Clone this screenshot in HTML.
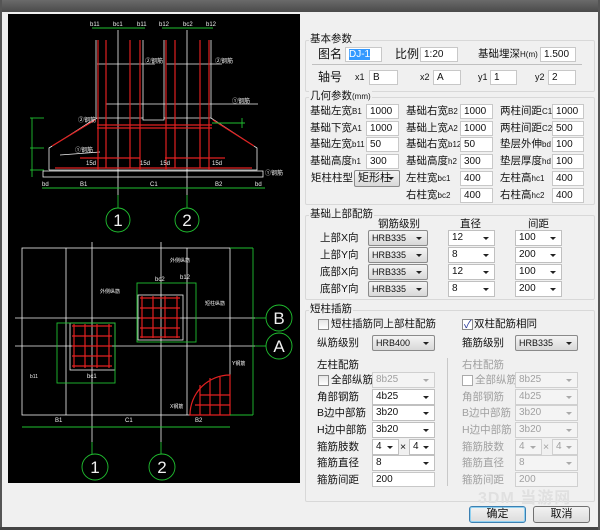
<!DOCTYPE html>
<html><head><meta charset="utf-8">
<style>
*{margin:0;padding:0;box-sizing:border-box}
body{width:600px;height:530px;overflow:hidden;background:#f0f0f0;font-family:"Liberation Sans","Noto Sans CJK SC",sans-serif;font-size:10.5px;color:#111;position:relative}
.a{position:absolute;white-space:nowrap;line-height:14px}
.i{position:absolute;height:15px;background:#fff;border:1px solid #c8c8c8;font-size:10px;line-height:13px;padding-left:3px;font-family:"Liberation Sans","Noto Sans CJK SC",sans-serif}
.s{position:absolute;height:16px;background:#fff;border:1px solid #c0c0c0;font-size:10px;line-height:14px;padding-left:3px}
.s:after{content:"";position:absolute;right:5px;top:6px;border-left:3px solid transparent;border-right:3px solid transparent;border-top:3px solid #222}
.g{background:linear-gradient(#f4f4f4,#d8d8d8);border:1px solid #8a8a8a;border-radius:2px;font-size:9px}
.d{color:#a0a0a0}
.d.s,.d.i{background:#f4f4f4;border-color:#d0d0d0}
.d.s:after{border-top-color:#aaa}
.box{position:absolute;border:1px solid #d8d8d8;border-radius:2px}
.cb{position:absolute;width:11px;height:11px;border:1px solid #8a8a8a;background:linear-gradient(#e6e6e6,#fff)}
.btn{position:absolute;height:17px;border:1px solid #707070;border-radius:3px;background:linear-gradient(#f2f2f2,#dcdcdc);text-align:center;line-height:15px;font-size:11px}
</style></head><body>
<div style="position:absolute;left:0;top:0;width:600px;height:12px;background:linear-gradient(#6a6a6a,#4a4a4a)"></div>
<div style="position:absolute;left:0;top:0;width:2px;height:530px;background:#555"></div>
<div style="position:absolute;left:0;top:527px;width:600px;height:3px;background:#444"></div>
<div style="position:absolute;left:598px;top:0;width:2px;height:530px;background:#555"></div>
<div style="position:absolute;left:8px;top:14px;width:292px;height:469px;background:#000"></div>
<svg style="position:absolute;left:0;top:0" width="300" height="483" viewBox="0 0 300 483" font-family="Liberation Sans" font-size="6">
<g stroke="#f0f0f0" stroke-width="0.8" fill="none">
<line x1="96" y1="40" x2="96" y2="118"/><line x1="143" y1="40" x2="143" y2="118"/>
<line x1="164" y1="40" x2="164" y2="118"/><line x1="211" y1="40" x2="211" y2="118"/>
<polyline points="49,170 49,148 97,118 143,118 143,120 164,120 164,118 211,118 257,148 257,170 49,170"/>
<rect x="43" y="171" width="220" height="6"/>
<line x1="118" y1="30" x2="118" y2="195"/><line x1="187" y1="30" x2="187" y2="195"/>
<line x1="97" y1="64" x2="155" y2="64"/><line x1="166" y1="64" x2="222" y2="64"/>
<line x1="106" y1="104" x2="258" y2="104"/>
<line x1="60" y1="155" x2="100" y2="152"/><line x1="70" y1="135" x2="90" y2="122"/>
<rect x="22" y="18" width="208" height="167" transform="translate(0,230)"/>
<line x1="66" y1="248" x2="66" y2="415"/><line x1="187" y1="248" x2="187" y2="415"/>
<line x1="92" y1="242" x2="92" y2="442"/><line x1="161" y1="242" x2="161" y2="442"/>
<line x1="15" y1="318" x2="255" y2="318"/><line x1="15" y1="346" x2="255" y2="346"/>
<rect x="70" y="323" width="45" height="47"/><rect x="138" y="295" width="45" height="45"/>
</g>
<g stroke="#e02020" stroke-width="1.2" fill="none">
<line x1="98" y1="40" x2="98" y2="170"/><line x1="106" y1="40" x2="106" y2="168"/><line x1="130" y1="40" x2="130" y2="168"/><line x1="140" y1="40" x2="140" y2="170"/>
<line x1="166" y1="40" x2="166" y2="170"/><line x1="175" y1="40" x2="175" y2="168"/><line x1="200" y1="40" x2="200" y2="168"/><line x1="209" y1="40" x2="209" y2="170"/>
<line x1="97" y1="125" x2="212" y2="125"/><line x1="97" y1="128" x2="212" y2="128"/>
<line x1="55" y1="168" x2="252" y2="168"/><line x1="80" y1="158" x2="140" y2="158"/><line x1="165" y1="158" x2="225" y2="158"/>
<line x1="52" y1="146" x2="95" y2="120"/><line x1="213" y1="120" x2="254" y2="146"/>
<path d="M72 326h40M72 336h40M72 346h40M72 356h40M72 366h40M74 324v44M85 324v44M97 324v44M109 324v44"/>
<path d="M140 298h40M140 308h40M140 318h40M140 328h40M140 337h40M142 296v42M153 296v42M165 296v42M177 296v42"/>
<path d="M190 415A40 40 0 0 1 230 375V415Z M200 395h30M195 405h35M200 385v30M210 378v37M220 376v39"/>
</g>
<g stroke="#20c030" stroke-width="0.9" fill="none">
<line x1="92" y1="28" x2="145" y2="28"/><line x1="162" y1="28" x2="213" y2="28"/>
<line x1="42" y1="188" x2="265" y2="188"/>
<line x1="32" y1="118" x2="32" y2="177"/><line x1="30" y1="118" x2="44" y2="118"/><line x1="30" y1="148" x2="44" y2="148"/><line x1="30" y1="170" x2="44" y2="170"/>
<line x1="118" y1="195" x2="118" y2="208"/><line x1="187" y1="195" x2="187" y2="208"/>
<circle cx="118" cy="220" r="12"/><circle cx="187" cy="220" r="12"/>
<line x1="92" y1="442" x2="92" y2="454"/><line x1="161" y1="442" x2="161" y2="454"/>
<circle cx="95" cy="467" r="13"/><circle cx="162" cy="467" r="13"/>
<line x1="255" y1="318" x2="266" y2="318"/><line x1="255" y1="346" x2="266" y2="346"/>
<circle cx="279" cy="318" r="13"/><circle cx="279" cy="346" r="13"/>
<line x1="253" y1="248" x2="253" y2="415"/><line x1="230" y1="248" x2="253" y2="248"/><line x1="230" y1="415" x2="253" y2="415"/>
<line x1="22" y1="427" x2="230" y2="427"/>
<rect x="57" y="323" width="58" height="60"/><rect x="137" y="283" width="59" height="59"/>
<line x1="212" y1="123" x2="245" y2="123"/><line x1="242" y1="118" x2="242" y2="128"/>
</g>
<g fill="#f0f0f0">
<text x="90" y="26">b11</text><text x="113" y="26">bc1</text><text x="137" y="26">b11</text>
<text x="159" y="26">b12</text><text x="183" y="26">bc2</text><text x="206" y="26">b12</text>
<text x="42" y="186">bd</text><text x="80" y="186">B1</text><text x="150" y="186">C1</text><text x="215" y="186">B2</text><text x="255" y="186">bd</text>
<text x="145" y="63">②钢筋</text><text x="215" y="63">②钢筋</text><text x="232" y="103">①钢筋</text><text x="78" y="122">②钢筋</text><text x="75" y="152">①钢筋</text><text x="265" y="175">①钢筋</text>
<text x="86" y="165">15d</text><text x="140" y="165">15d</text><text x="160" y="165">15d</text><text x="212" y="165">15d</text>
<text x="30" y="378" font-size="5">b11</text><text x="87" y="378">bc1</text><text x="155" y="281">bc2</text><text x="180" y="279">b12</text>
<text x="100" y="293" font-size="5">外侧纵筋</text><text x="170" y="262" font-size="5">外侧纵筋</text><text x="205" y="305" font-size="5">短柱纵筋</text><text x="232" y="365" font-size="5">Y钢筋</text><text x="170" y="408" font-size="5">X钢筋</text>
<text x="55" y="422">B1</text><text x="125" y="422">C1</text><text x="195" y="422">B2</text>
</g>
<g fill="#f0f0f0" font-size="17" font-family="Liberation Sans" text-anchor="middle">
<text x="118" y="226">1</text><text x="187" y="226">2</text><text x="95" y="473">1</text><text x="162" y="473">2</text>
<text x="279" y="324">B</text><text x="279" y="352">A</text>
</g>
</svg>

<div class="box" style="left:305px;top:40px;width:290px;height:52px"></div>
<div class="a" style="left:309px;top:32px;background:#f0f0f0;padding:0 1px">基本参数</div>
<div class="a" style="left:318px;top:47px;font-size:12px">图名</div>
<div class="i" style="left:345px;top:47px;width:37px"><span style="background:#3399ff;color:#fff">DJ-1</span></div>
<div class="a" style="left:395px;top:47px;font-size:12px">比例</div>
<div class="i" style="left:420px;top:47px;width:38px">1:20</div>
<div class="a" style="left:478px;top:47px">基础埋深<span style="font-size:8px">H(m)</span></div>
<div class="i" style="left:540px;top:47px;width:36px">1.500</div>
<div style="position:absolute;left:312px;top:64px;width:270px;height:1px;background:#c0c0c0"></div>
<div class="a" style="left:318px;top:70px;font-size:12px">轴号</div>
<div class="a" style="left:355px;top:70px;font-size:9px">x1</div><div class="i" style="left:369px;top:70px;width:29px">B</div>
<div class="a" style="left:420px;top:70px;font-size:9px">x2</div><div class="i" style="left:433px;top:70px;width:28px">A</div>
<div class="a" style="left:478px;top:70px;font-size:9px">y1</div><div class="i" style="left:490px;top:70px;width:27px">1</div>
<div class="a" style="left:535px;top:70px;font-size:9px">y2</div><div class="i" style="left:548px;top:70px;width:28px">2</div>

<div class="box" style="left:305px;top:97px;width:290px;height:108px"></div>
<div class="a" style="left:309px;top:89px;background:#f0f0f0;padding:0 1px">几何参数<span style="font-size:8px">(mm)</span></div>
<div class="a" style="left:310px;top:104px">基础左宽<span style="font-size:8px">B1</span></div><div class="i" style="left:366px;top:104px;width:33px">1000</div>
<div class="a" style="left:406px;top:104px">基础右宽<span style="font-size:8px">B2</span></div><div class="i" style="left:460px;top:104px;width:33px">1000</div>
<div class="a" style="left:500px;top:104px">两柱间距<span style="font-size:8px">C1</span></div><div class="i" style="left:552px;top:104px;width:32px">1000</div>
<div class="a" style="left:310px;top:121px">基础下宽<span style="font-size:8px">A1</span></div><div class="i" style="left:366px;top:121px;width:33px">1000</div>
<div class="a" style="left:406px;top:121px">基础上宽<span style="font-size:8px">A2</span></div><div class="i" style="left:460px;top:121px;width:33px">1000</div>
<div class="a" style="left:500px;top:121px">两柱间距<span style="font-size:8px">C2</span></div><div class="i" style="left:552px;top:121px;width:32px">500</div>
<div class="a" style="left:310px;top:137px">基础左宽<span style="font-size:8px">b11</span></div><div class="i" style="left:366px;top:137px;width:33px">50</div>
<div class="a" style="left:406px;top:137px">基础右宽<span style="font-size:8px">b12</span></div><div class="i" style="left:460px;top:137px;width:33px">50</div>
<div class="a" style="left:500px;top:137px">垫层外伸<span style="font-size:8px">bd</span></div><div class="i" style="left:552px;top:137px;width:32px">100</div>
<div class="a" style="left:310px;top:154px">基础高度<span style="font-size:8px">h1</span></div><div class="i" style="left:366px;top:154px;width:33px">300</div>
<div class="a" style="left:406px;top:154px">基础高度<span style="font-size:8px">h2</span></div><div class="i" style="left:460px;top:154px;width:33px">300</div>
<div class="a" style="left:500px;top:154px">垫层厚度<span style="font-size:8px">hd</span></div><div class="i" style="left:552px;top:154px;width:32px">100</div>
<div class="a" style="left:311px;top:171px">矩柱柱型</div><div class="s g" style="left:354px;top:170px;width:46px;height:17px;font-size:11px">矩形柱</div>
<div class="a" style="left:406px;top:171px">左柱宽<span style="font-size:8px">bc1</span></div><div class="i" style="left:460px;top:171px;width:33px">400</div>
<div class="a" style="left:500px;top:171px">左柱高<span style="font-size:8px">hc1</span></div><div class="i" style="left:552px;top:171px;width:32px">400</div>
<div class="a" style="left:406px;top:188px">右柱宽<span style="font-size:8px">bc2</span></div><div class="i" style="left:460px;top:188px;width:33px">400</div>
<div class="a" style="left:500px;top:188px">右柱高<span style="font-size:8px">hc2</span></div><div class="i" style="left:552px;top:188px;width:32px">400</div>

<div class="box" style="left:305px;top:215px;width:290px;height:85px"></div>
<div class="a" style="left:309px;top:207px;background:#f0f0f0;padding:0 1px">基础上部配筋</div>
<div class="a" style="left:378px;top:217px">钢筋级别</div><div class="a" style="left:460px;top:217px">直径</div><div class="a" style="left:528px;top:217px">间距</div>
<div class="a" style="left:320px;top:231px">上部X向</div><div class="s g" style="left:368px;top:230px;width:60px">HRB335</div><div class="s" style="left:448px;top:230px;width:47px">12</div><div class="s" style="left:515px;top:230px;width:47px">100</div>
<div class="a" style="left:320px;top:248px">上部Y向</div><div class="s g" style="left:368px;top:247px;width:60px">HRB335</div><div class="s" style="left:448px;top:247px;width:47px">8</div><div class="s" style="left:515px;top:247px;width:47px">200</div>
<div class="a" style="left:320px;top:265px">底部X向</div><div class="s g" style="left:368px;top:264px;width:60px">HRB335</div><div class="s" style="left:448px;top:264px;width:47px">12</div><div class="s" style="left:515px;top:264px;width:47px">100</div>
<div class="a" style="left:320px;top:282px">底部Y向</div><div class="s g" style="left:368px;top:281px;width:60px">HRB335</div><div class="s" style="left:448px;top:281px;width:47px">8</div><div class="s" style="left:515px;top:281px;width:47px">200</div>

<div class="box" style="left:305px;top:310px;width:290px;height:192px"></div>
<div class="a" style="left:309px;top:302px;background:#f0f0f0;padding:0 1px">短柱插筋</div>
<div class="cb" style="left:318px;top:319px"></div><div class="a" style="left:331px;top:317px">短柱插筋同上部柱配筋</div>
<div class="cb" style="left:462px;top:319px;background:#fff"><span style="position:absolute;left:1px;top:-4px;font-size:11px;color:#2a3a9a">✓</span></div><div class="a" style="left:474px;top:317px">双柱配筋相同</div>
<div class="a" style="left:317px;top:336px">纵筋级别</div><div class="s g" style="left:372px;top:335px;width:63px">HRB400</div>
<div class="a" style="left:462px;top:336px">箍筋级别</div><div class="s g" style="left:515px;top:335px;width:63px">HRB335</div>
<div class="a" style="left:317px;top:358px">左柱配筋</div><div class="a d" style="left:462px;top:358px">右柱配筋</div>
<div style="position:absolute;left:447px;top:358px;width:1px;height:128px;background:#c8c8c8"></div>
<div class="cb" style="left:318px;top:375px"></div><div class="a" style="left:331px;top:373px">全部纵筋</div><div class="s d" style="left:372px;top:372px;width:63px">8b25</div>
<div class="cb" style="left:462px;top:375px;border-color:#aaa;background:#fff"></div><div class="a d" style="left:475px;top:373px">全部纵筋</div><div class="s d" style="left:515px;top:372px;width:63px">8b25</div>
<div class="a" style="left:317px;top:390px">角部钢筋</div><div class="s" style="left:372px;top:389px;width:63px">4b25</div>
<div class="a d" style="left:462px;top:390px">角部钢筋</div><div class="s d" style="left:515px;top:389px;width:63px">4b25</div>
<div class="a" style="left:317px;top:406px">B边中部筋</div><div class="s" style="left:372px;top:405px;width:63px">3b20</div>
<div class="a d" style="left:462px;top:406px">B边中部筋</div><div class="s d" style="left:515px;top:405px;width:63px">3b20</div>
<div class="a" style="left:317px;top:423px">H边中部筋</div><div class="s" style="left:372px;top:422px;width:63px">3b20</div>
<div class="a d" style="left:462px;top:423px">H边中部筋</div><div class="s d" style="left:515px;top:422px;width:63px">3b20</div>
<div class="a" style="left:317px;top:440px">箍筋肢数</div><div class="s" style="left:372px;top:439px;width:27px">4</div><div class="a" style="left:400px;top:440px">×</div><div class="s" style="left:409px;top:439px;width:26px">4</div>
<div class="a d" style="left:462px;top:440px">箍筋肢数</div><div class="s d" style="left:515px;top:439px;width:27px">4</div><div class="a d" style="left:543px;top:440px">×</div><div class="s d" style="left:552px;top:439px;width:26px">4</div>
<div class="a" style="left:317px;top:456px">箍筋直径</div><div class="s" style="left:372px;top:455px;width:63px">8</div>
<div class="a d" style="left:462px;top:456px">箍筋直径</div><div class="s d" style="left:515px;top:455px;width:63px">8</div>
<div class="a" style="left:317px;top:473px">箍筋间距</div><div class="i" style="left:372px;top:472px;width:63px">200</div>
<div class="a d" style="left:462px;top:473px">箍筋间距</div><div class="i d" style="left:515px;top:472px;width:63px">200</div>

<div class="a" style="left:478px;top:492px;font-size:16px;color:#e0e0e0;font-weight:bold;letter-spacing:1px">3DM 当游网</div>
<div class="btn" style="left:469px;top:506px;width:57px;border-color:#3c7fb1;box-shadow:inset 0 0 0 1px #8fd0f0">确定</div>
<div class="btn" style="left:533px;top:506px;width:57px">取消</div>
</body></html>
